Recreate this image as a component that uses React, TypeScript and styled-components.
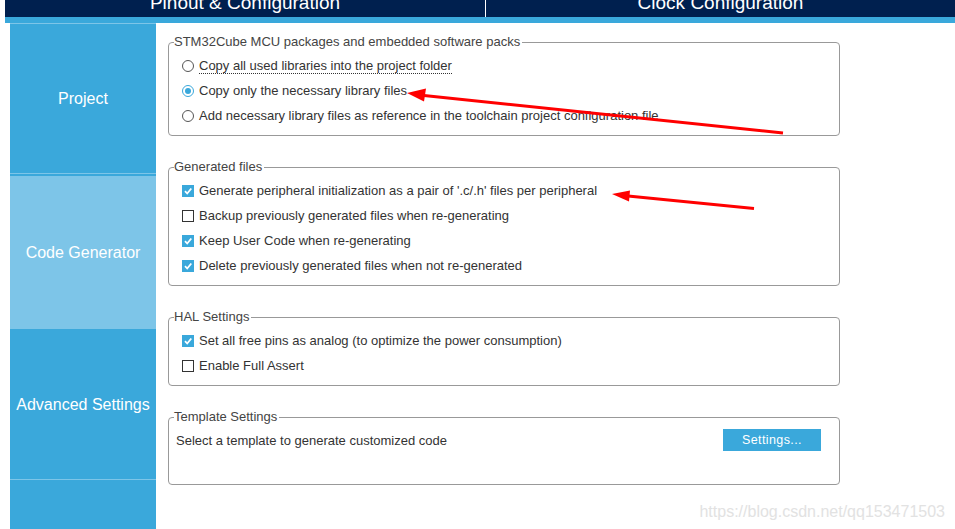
import React from "react";
import styled, { createGlobalStyle } from "styled-components";

const Global = createGlobalStyle`
  html, body { margin: 0; padding: 0; background: #fff; }
  body { font-family: "Liberation Sans", Arial, sans-serif; overflow: hidden; }
  #root { width: 955px; height: 529px; }
`;

const Page = styled.div`
  position: relative;
  width: 955px;
  height: 529px;
  overflow: hidden;
  background: #fff;
  padding-left: 5px;
  box-sizing: border-box;
`;

const TopBar = styled.div`
  display: flex;
  height: 17px;
  background: #00204f;
  overflow: hidden;
`;

const TopTab = styled.div<{ $divider?: boolean }>`
  flex: ${(p) => (p.$divider ? "0 0 480px" : "1")};
  border-right: ${(p) => (p.$divider ? "1px solid #ffffff" : "none")};
  display: flex;
  justify-content: center;
  color: #fff;
  font-size: 19px;
  line-height: 19px;
  span { margin-top: -7px; display: block; }
`;

const BlueStrip = styled.div`
  height: 6px;
  background: #3aa8db;
`;

const Body = styled.div`
  display: flex;
  padding-left: 5px;
  gap: 12px;
`;

const Sidebar = styled.div`
  width: 146px;
  flex: 0 0 146px;
  height: 506px;
  background: #3aa8db;
  display: flex;
  flex-direction: column;
`;

const Tab = styled.div<{ $active?: boolean; $line?: boolean; $h: number }>`
  height: ${(p) => p.$h}px;
  flex: 0 0 ${(p) => p.$h}px;
  box-sizing: border-box;
  border-top: ${(p) => (p.$line ? "1px solid #7dc5e8" : "none")};
  padding-top: ${(p) => (p.$active ? "2px" : "0")};
  display: flex;
  flex-direction: column;
  div {
    flex: 1;
    display: flex;
    align-items: center;
    justify-content: center;
    padding-top: 1px;
    background: ${(p) => (p.$active ? "#7dc5e8" : "transparent")};
    color: #fff;
    font-size: 16px;
    white-space: nowrap;
  }
`;

const Main = styled.div`
  width: 672px;
  padding-top: 12px;
  display: flex;
  flex-direction: column;
  gap: 24px;
`;

const Group = styled.fieldset<{ $pad?: string }>`
  margin: 0;
  border: 1px solid #999;
  border-radius: 4px;
  padding: ${(p) => p.$pad || "4px 10px 7px 13px"};
  min-width: 0;
`;

const Legend = styled.legend<{ $shift: number }>`
  padding: 0 2px 0 0;
  margin-left: ${(p) => p.$shift}px;
  font-size: 13px;
  line-height: 14px;
  color: #444;
`;

const Row = styled.div`
  height: 25px;
  display: flex;
  align-items: center;
  gap: 5px;
  font-size: 13px;
  color: #333;
  white-space: nowrap;
`;

const Label = styled.span<{ $focus?: boolean }>`
  border-bottom: ${(p) => (p.$focus ? "1px dotted #333" : "1px solid transparent")};
  line-height: 15px;
  margin-top: 1px;
`;

const RadioMark = styled.span<{ $on?: boolean }>`
  width: 10px;
  height: 10px;
  border-radius: 50%;
  border: 1px solid ${(p) => (p.$on ? "#3aa8db" : "#555")};
  display: flex;
  align-items: center;
  justify-content: center;
  flex: 0 0 auto;
  &::after {
    content: "";
    width: 6px;
    height: 6px;
    border-radius: 50%;
    background: ${(p) => (p.$on ? "#3aa8db" : "transparent")};
  }
`;

const CheckMark = styled.span<{ $on?: boolean }>`
  width: ${(p) => (p.$on ? "12px" : "10px")};
  height: ${(p) => (p.$on ? "12px" : "10px")};
  border: ${(p) => (p.$on ? "none" : "1px solid #333")};
  background: ${(p) => (p.$on ? "#3aa8db" : "#fff")};
  display: flex;
  align-items: center;
  justify-content: center;
  flex: 0 0 auto;
`;

const TemplateRow = styled.div`
  display: flex;
  justify-content: space-between;
  align-items: center;
  height: 22px;
  font-size: 13px;
  color: #333;
`;

const Button = styled.button`
  width: 98px;
  height: 22px;
  border: none;
  background: #3aa8db;
  color: #fff;
  font-family: "Liberation Sans", Arial, sans-serif;
  font-size: 12.5px;
  letter-spacing: 0.4px;
  padding: 0;
`;

const Overlay = styled.svg`
  position: absolute;
  left: 0;
  top: 0;
  pointer-events: none;
`;

const Watermark = styled.div`
  position: absolute;
  right: 10px;
  bottom: 8px;
  font-size: 16px;
  color: #e2e2e2;
`;

const Radio = ({ on, label, focus }: { on?: boolean; label: string; focus?: boolean }) => (
  <Row>
    <RadioMark $on={on} />
    <Label $focus={focus}>{label}</Label>
  </Row>
);

const Check = ({ on, label }: { on?: boolean; label: string }) => (
  <Row>
    <CheckMark $on={on}>
      {on && (
        <svg width="10" height="10" viewBox="0 0 10 10">
          <path d="M2 5.2 L4.2 7.5 L8.3 2.5" stroke="#fff" strokeWidth="1.8" fill="none" />
        </svg>
      )}
    </CheckMark>
    <Label>{label}</Label>
  </Row>
);

export default function App() {
  return (
    <Page>
      <Global />
      <TopBar>
        <TopTab $divider>
          <span>Pinout &amp; Configuration</span>
        </TopTab>
        <TopTab>
          <span>Clock Configuration</span>
        </TopTab>
      </TopBar>
      <BlueStrip />
      <Body>
        <Sidebar>
          <Tab $h={150} $line>
            <div>Project</div>
          </Tab>
          <Tab $h={156} $line $active>
            <div>Code Generator</div>
          </Tab>
          <Tab $h={150}>
            <div>Advanced Settings</div>
          </Tab>
          <Tab $h={50} $line>
            <div />
          </Tab>
        </Sidebar>
        <Main>
          <Group>
            <Legend $shift={-8}>STM32Cube MCU packages and embedded software packs</Legend>
            <Radio label="Copy all used libraries into the project folder" focus />
            <Radio on label="Copy only the necessary library files" />
            <Radio label="Add necessary library files as reference in the toolchain project configuration file" />
          </Group>
          <Group>
            <Legend $shift={-8}>Generated files</Legend>
            <Check on label="Generate peripheral initialization as a pair of '.c/.h' files per peripheral" />
            <Check label="Backup previously generated files when re-generating" />
            <Check on label="Keep User Code when re-generating" />
            <Check on label="Delete previously generated files when not re-generated" />
          </Group>
          <Group>
            <Legend $shift={-8}>HAL Settings</Legend>
            <Check on label="Set all free pins as analog (to optimize the power consumption)" />
            <Check label="Enable Full Assert" />
          </Group>
          <Group $pad="5px 18px 33px 7px">
            <Legend $shift={-2}>Template Settings</Legend>
            <TemplateRow>
              <span>Select a template to generate customized code</span>
              <Button>Settings...</Button>
            </TemplateRow>
          </Group>
        </Main>
      </Body>
      <Overlay width="955" height="529" viewBox="0 0 955 529">
        <line x1="783" y1="133" x2="424" y2="95.5" stroke="#f00" strokeWidth="3" />
        <polygon points="407,93 426,88.5 424,101.5" fill="#f00" />
        <line x1="754" y1="208.5" x2="628" y2="196" stroke="#f00" strokeWidth="3" />
        <polygon points="612,194 630,190.5 629,201.5" fill="#f00" />
      </Overlay>
      <Watermark>https://blog.csdn.net/qq153471503</Watermark>
    </Page>
  );
}
